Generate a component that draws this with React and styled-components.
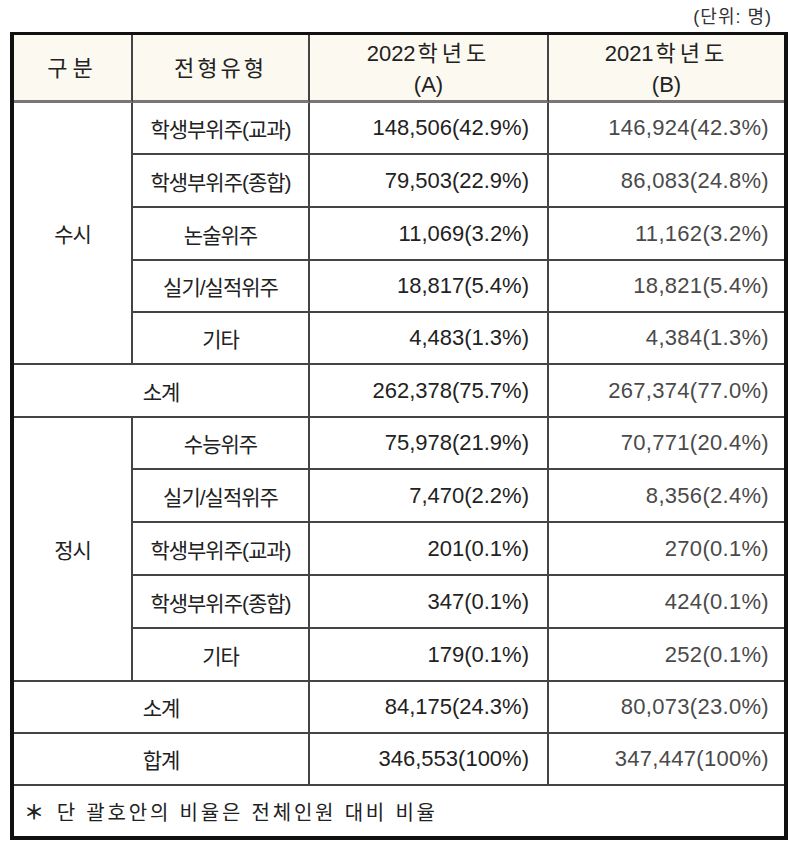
import React from 'react';
import styled, { createGlobalStyle } from 'styled-components';

const GlobalStyle = createGlobalStyle`
  body {
    margin: 0;
    background: #ffffff;
    font-family: "Liberation Sans", "Noto Sans CJK KR", sans-serif;
  }
`;

const susi = [
  ['학생부위주(교과)', '148,506(42.9%)', '146,924(42.3%)'],
  ['학생부위주(종합)', '79,503(22.9%)', '86,083(24.8%)'],
  ['논술위주', '11,069(3.2%)', '11,162(3.2%)'],
  ['실기/실적위주', '18,817(5.4%)', '18,821(5.4%)'],
  ['기타', '4,483(1.3%)', '4,384(1.3%)'],
];

const jeongsi = [
  ['수능위주', '75,978(21.9%)', '70,771(20.4%)'],
  ['실기/실적위주', '7,470(2.2%)', '8,356(2.4%)'],
  ['학생부위주(교과)', '201(0.1%)', '270(0.1%)'],
  ['학생부위주(종합)', '347(0.1%)', '424(0.1%)'],
  ['기타', '179(0.1%)', '252(0.1%)'],
];

const rowHeights = [52, 53, 53, 52, 52, 53, 52, 53, 53, 53, 53, 52, 52];

const Page = styled.div`
  width: 778px;
  margin-left: 10px;
`;

const Unit = styled.div`
  height: 32px;
  box-sizing: border-box;
  padding: 7px 16px 0 0;
  text-align: right;
  font-size: 18px;
  line-height: 20px;
  color: #333;
  letter-spacing: 1px;
`;

const Board = styled.div`
  display: grid;
  grid-template-columns: 119px 177px 239px 235px;
  grid-template-rows: ${({ $rows }) => $rows};
  border: 4px solid #111;
  border-top-width: 3px;
`;

const Cell = styled.div`
  box-sizing: border-box;
  display: flex;
  align-items: center;
  justify-content: center;
  border-right: ${({ $last }) => ($last ? 'none' : '2px solid #444')};
  border-bottom: 2px solid #444;
  grid-row: ${({ $rowSpan }) => ($rowSpan ? `span ${$rowSpan}` : 'auto')};
  grid-column: ${({ $colSpan }) => ($colSpan ? `span ${$colSpan}` : 'auto')};
  font-size: 21px;
  letter-spacing: -1px;
  color: #222;
  white-space: nowrap;
`;

const HeadCell = styled(Cell)`
  flex-direction: column;
  background: #fcf9f1;
  border-bottom: 3px solid #777;
  font-size: 22px;
  line-height: 31px;
  letter-spacing: ${({ $spread }) => $spread || '0'};
  padding-top: 2px;
`;

const Year = styled.span`
  letter-spacing: 0;
  em {
    font-style: normal;
    letter-spacing: 4px;
    margin-left: 2px;
  }
`;

const NumCell = styled(Cell)`
  justify-content: flex-end;
  padding-right: ${({ $last }) => ($last ? '15px' : '18px')};
  font-size: 22px;
  letter-spacing: ${({ $last }) => ($last ? '0.3px' : '0')};
  color: ${({ $last }) => ($last ? '#4a4a4a' : '#222')};
`;

const Note = styled.div`
  grid-column: 1 / -1;
  display: flex;
  align-items: center;
  padding-left: 10px;
  font-size: 20px;
  letter-spacing: 2.8px;
  color: #222;
  white-space: pre;
`;

const Star = styled.span`
  font-weight: 700;
  margin-right: 10px;
`;

function DataRows({ label, rows, sub }) {
  return (
    <>
      {rows.map(([kind, a, b], i) => (
        <React.Fragment key={kind + i}>
          {i === 0 && <Cell $rowSpan={rows.length}>{label}</Cell>}
          <Cell>{kind}</Cell>
          <NumCell>{a}</NumCell>
          <NumCell $last>{b}</NumCell>
        </React.Fragment>
      ))}
      <Cell $colSpan={2}>소계</Cell>
      <NumCell>{sub[0]}</NumCell>
      <NumCell $last>{sub[1]}</NumCell>
    </>
  );
}

export default function App() {
  const rows = ['68px', ...rowHeights.map((h) => `${h}px`), '50px'].join(' ');
  return (
    <Page>
      <GlobalStyle />
      <Unit>(단위: 명)</Unit>
      <Board $rows={rows}>
        <HeadCell $spread="5px">구분</HeadCell>
        <HeadCell $spread="3px">전형유형</HeadCell>
        <HeadCell>
          <Year>2022<em>학년도</em></Year>
          <span>(A)</span>
        </HeadCell>
        <HeadCell $last>
          <Year>2021<em>학년도</em></Year>
          <span>(B)</span>
        </HeadCell>

        <DataRows label="수시" rows={susi} sub={['262,378(75.7%)', '267,374(77.0%)']} />
        <DataRows label="정시" rows={jeongsi} sub={['84,175(24.3%)', '80,073(23.0%)']} />

        <Cell $colSpan={2}>합계</Cell>
        <NumCell>346,553(100%)</NumCell>
        <NumCell $last>347,447(100%)</NumCell>

        <Note><Star>＊</Star>단 괄호안의 비율은 전체인원 대비 비율</Note>
      </Board>
    </Page>
  );
}
